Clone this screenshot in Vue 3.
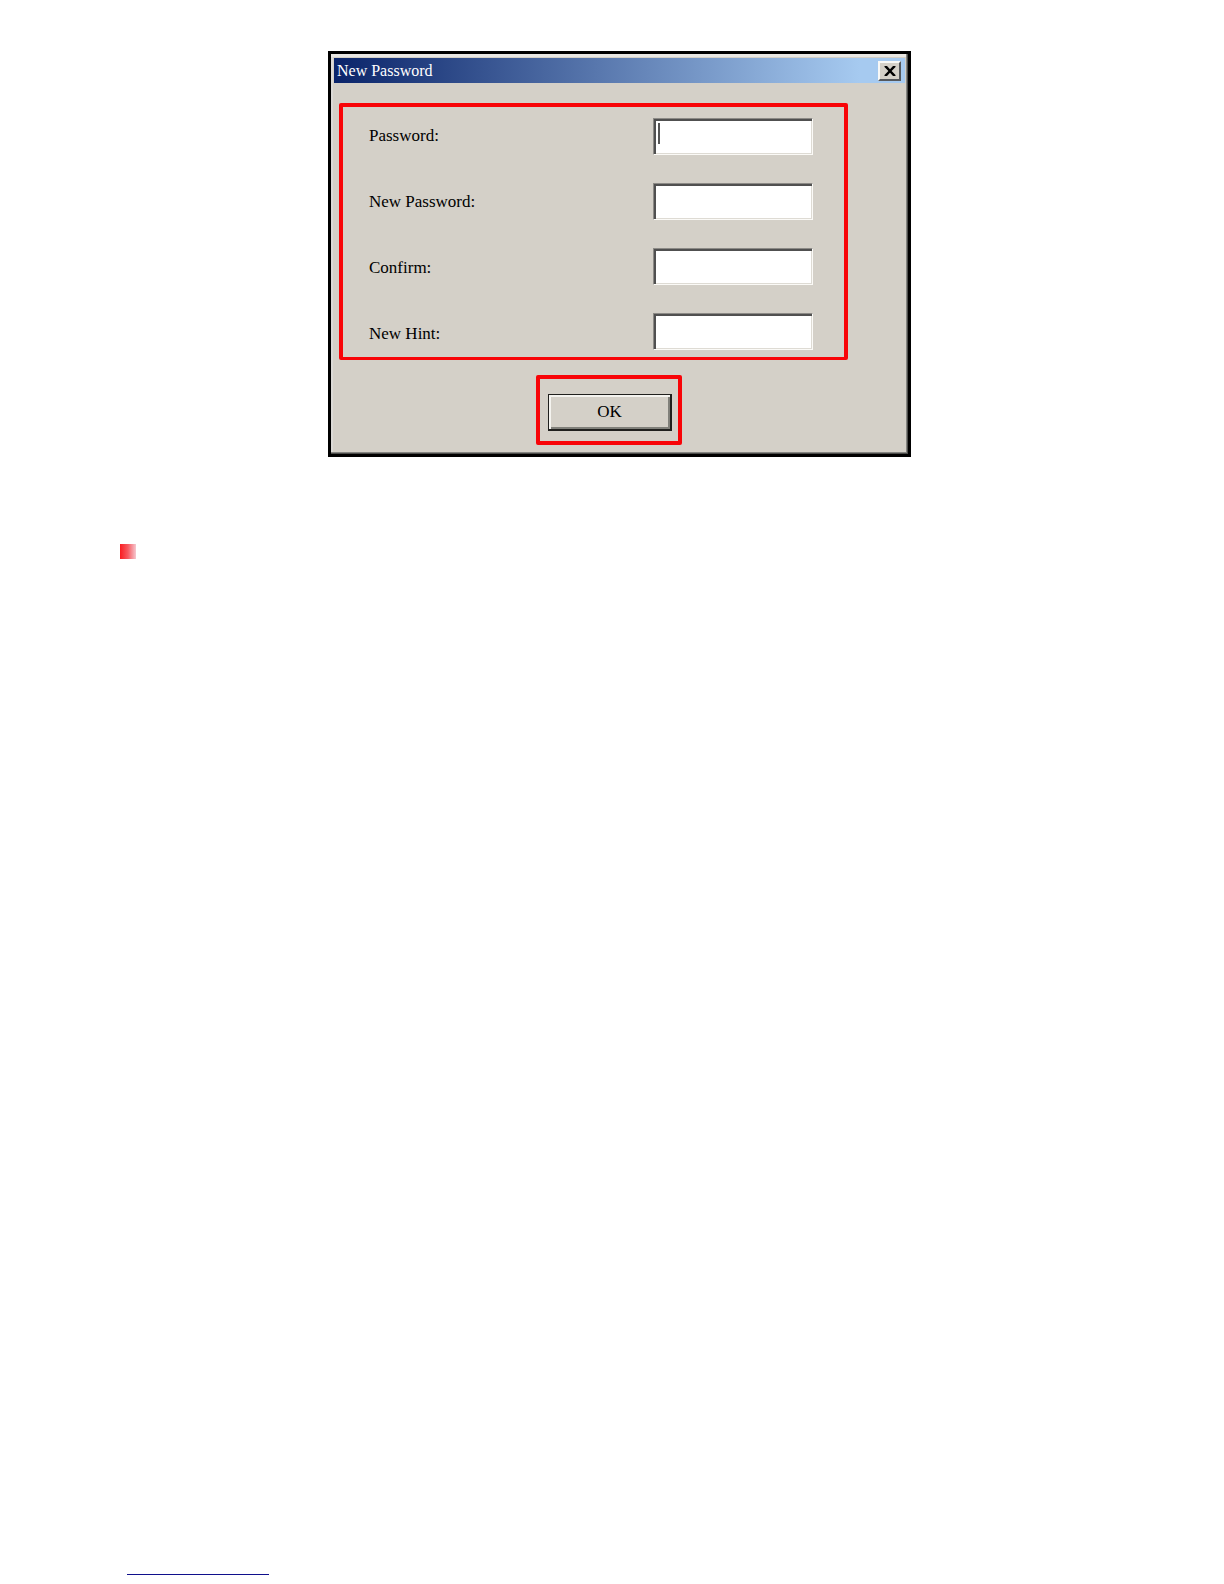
<script setup>
import { reactive } from 'vue'

const fields = reactive([
  { id: 'password', label: 'Password:', type: 'password', value: '', active: true },
  { id: 'new-password', label: 'New Password:', type: 'password', value: '' },
  { id: 'confirm', label: 'Confirm:', type: 'password', value: '' },
  { id: 'new-hint', label: 'New Hint:', type: 'text', value: '' },
])
</script>

<template>
  <main class="page">
    <form class="dialog" aria-labelledby="dialog-title" @submit.prevent>
      <header class="titlebar">
        <h1 id="dialog-title" class="title">New Password</h1>
        <button class="close" type="button" aria-label="Close">
          <svg viewBox="0 0 12 10" width="12" height="10" aria-hidden="true">
            <path d="M0.5 0h2.500L6 3.200 9 0h2.500v1L7.600 5l3.900 4v1H9L6 6.800 3 10H0.500V9l3.900-4L0.500 1z" fill="#000" />
          </svg>
        </button>
      </header>
      <section class="fields">
        <div class="labels">
          <label v-for="field in fields" :key="field.id" :for="field.id">{{ field.label }}</label>
        </div>
        <div class="inputs">
          <div v-for="field in fields" :key="field.id" class="control">
            <input :id="field.id" v-model="field.value" :type="field.type" autocomplete="off" />
            <span v-if="field.active" class="caret"></span>
          </div>
        </div>
      </section>
      <div class="actions">
        <button class="ok" type="submit">OK</button>
      </div>
    </form>
    <div class="bullet"></div>
    <footer class="footer">
      <a class="footer-link" href="#" aria-label="Website"></a>
    </footer>
  </main>
</template>

<style>
body {
  margin: 0;
  background: #fff;
}
</style>

<style scoped>
.page {
  box-sizing: border-box;
  display: flex;
  flex-direction: column;
  min-height: 100vh;
  padding: 51px 105px 9px 120px;
  font-family: "Liberation Serif", serif;
  font-size: 17px;
  line-height: 20px;
  color: #000;
}

.dialog {
  box-sizing: border-box;
  align-self: center;
  width: 100%;
  max-width: 583px;
  padding: 2px 2px 9px 3px;
  border: 3px solid #000;
  background: #d4d0c8;
  box-shadow: inset -1px -1px #4c4c4a, inset -2px -2px #858581, inset 0 3px #e9e7e3, inset 2px 0 #dcdad7;
}

.titlebar {
  display: flex;
  align-items: center;
  justify-content: space-between;
  height: 25px;
  margin: 2px 1px 0 0;
  padding: 0 4px 0 3px;
  background: linear-gradient(90deg, #0a246a, #a6caf0 92%);
}

.title {
  margin: 0;
  font-size: 16px;
  font-weight: normal;
  color: #fff;
}

.close {
  box-sizing: border-box;
  display: flex;
  align-items: center;
  justify-content: center;
  width: 23px;
  height: 20px;
  padding: 0;
  border: 2px solid;
  border-color: #f8f8f6 #55585c #55585c #f8f8f6;
  background: #d4d0c8;
}

.fields {
  display: flex;
  justify-content: space-between;
  margin: 20px 58px 0 5px;
  padding: 11px 31px 7px 26px;
  border: 4px solid #f80408;
  border-bottom-width: 3px;
  border-radius: 2px;
}

.labels {
  display: flex;
  flex-direction: column;
  gap: 46px;
  padding-top: 8px;
}

.inputs {
  display: flex;
  flex-direction: column;
  gap: 28px;
}

.control {
  position: relative;
  display: flex;
}

.control input {
  box-sizing: border-box;
  width: 160px;
  height: 37px;
  padding: 0 4px;
  border: 1px solid;
  border-color: #8c8a86 #fbfaf7 #fbfaf7 #8c8a86;
  border-radius: 0;
  outline: 0;
  background: #fff;
  box-shadow: inset 2px 2px #505050, inset -1px -1px #dedbd4;
  font: inherit;
}

.caret {
  position: absolute;
  top: 5px;
  left: 5px;
  width: 2px;
  height: 21px;
  background: #555;
}

.actions {
  width: fit-content;
  margin: 15px auto 0 202px;
  padding: 15px 6px 10px 8px;
  border: 4px solid #f80408;
  border-radius: 2px;
}

.ok {
  box-sizing: border-box;
  display: block;
  width: 124px;
  height: 37px;
  padding: 0;
  border: 1px solid #20201e;
  border-width: 1px 2px 2px 1px;
  background: #d4d0c8;
  box-shadow: inset 2px 2px #f4f3ef, inset -2px -2px #80807a;
  font: inherit;
  color: inherit;
}

.bullet {
  width: 16px;
  height: 15px;
  margin-top: 87px;
  background: linear-gradient(90deg, #fa1c20, #f65c62 50%, #f6c8d0);
}

.footer {
  display: flex;
  margin-top: auto;
  padding-left: 7px;
}

.footer-link {
  width: 142px;
  height: 18px;
  border-bottom: 1px solid #10108c;
}
</style>
